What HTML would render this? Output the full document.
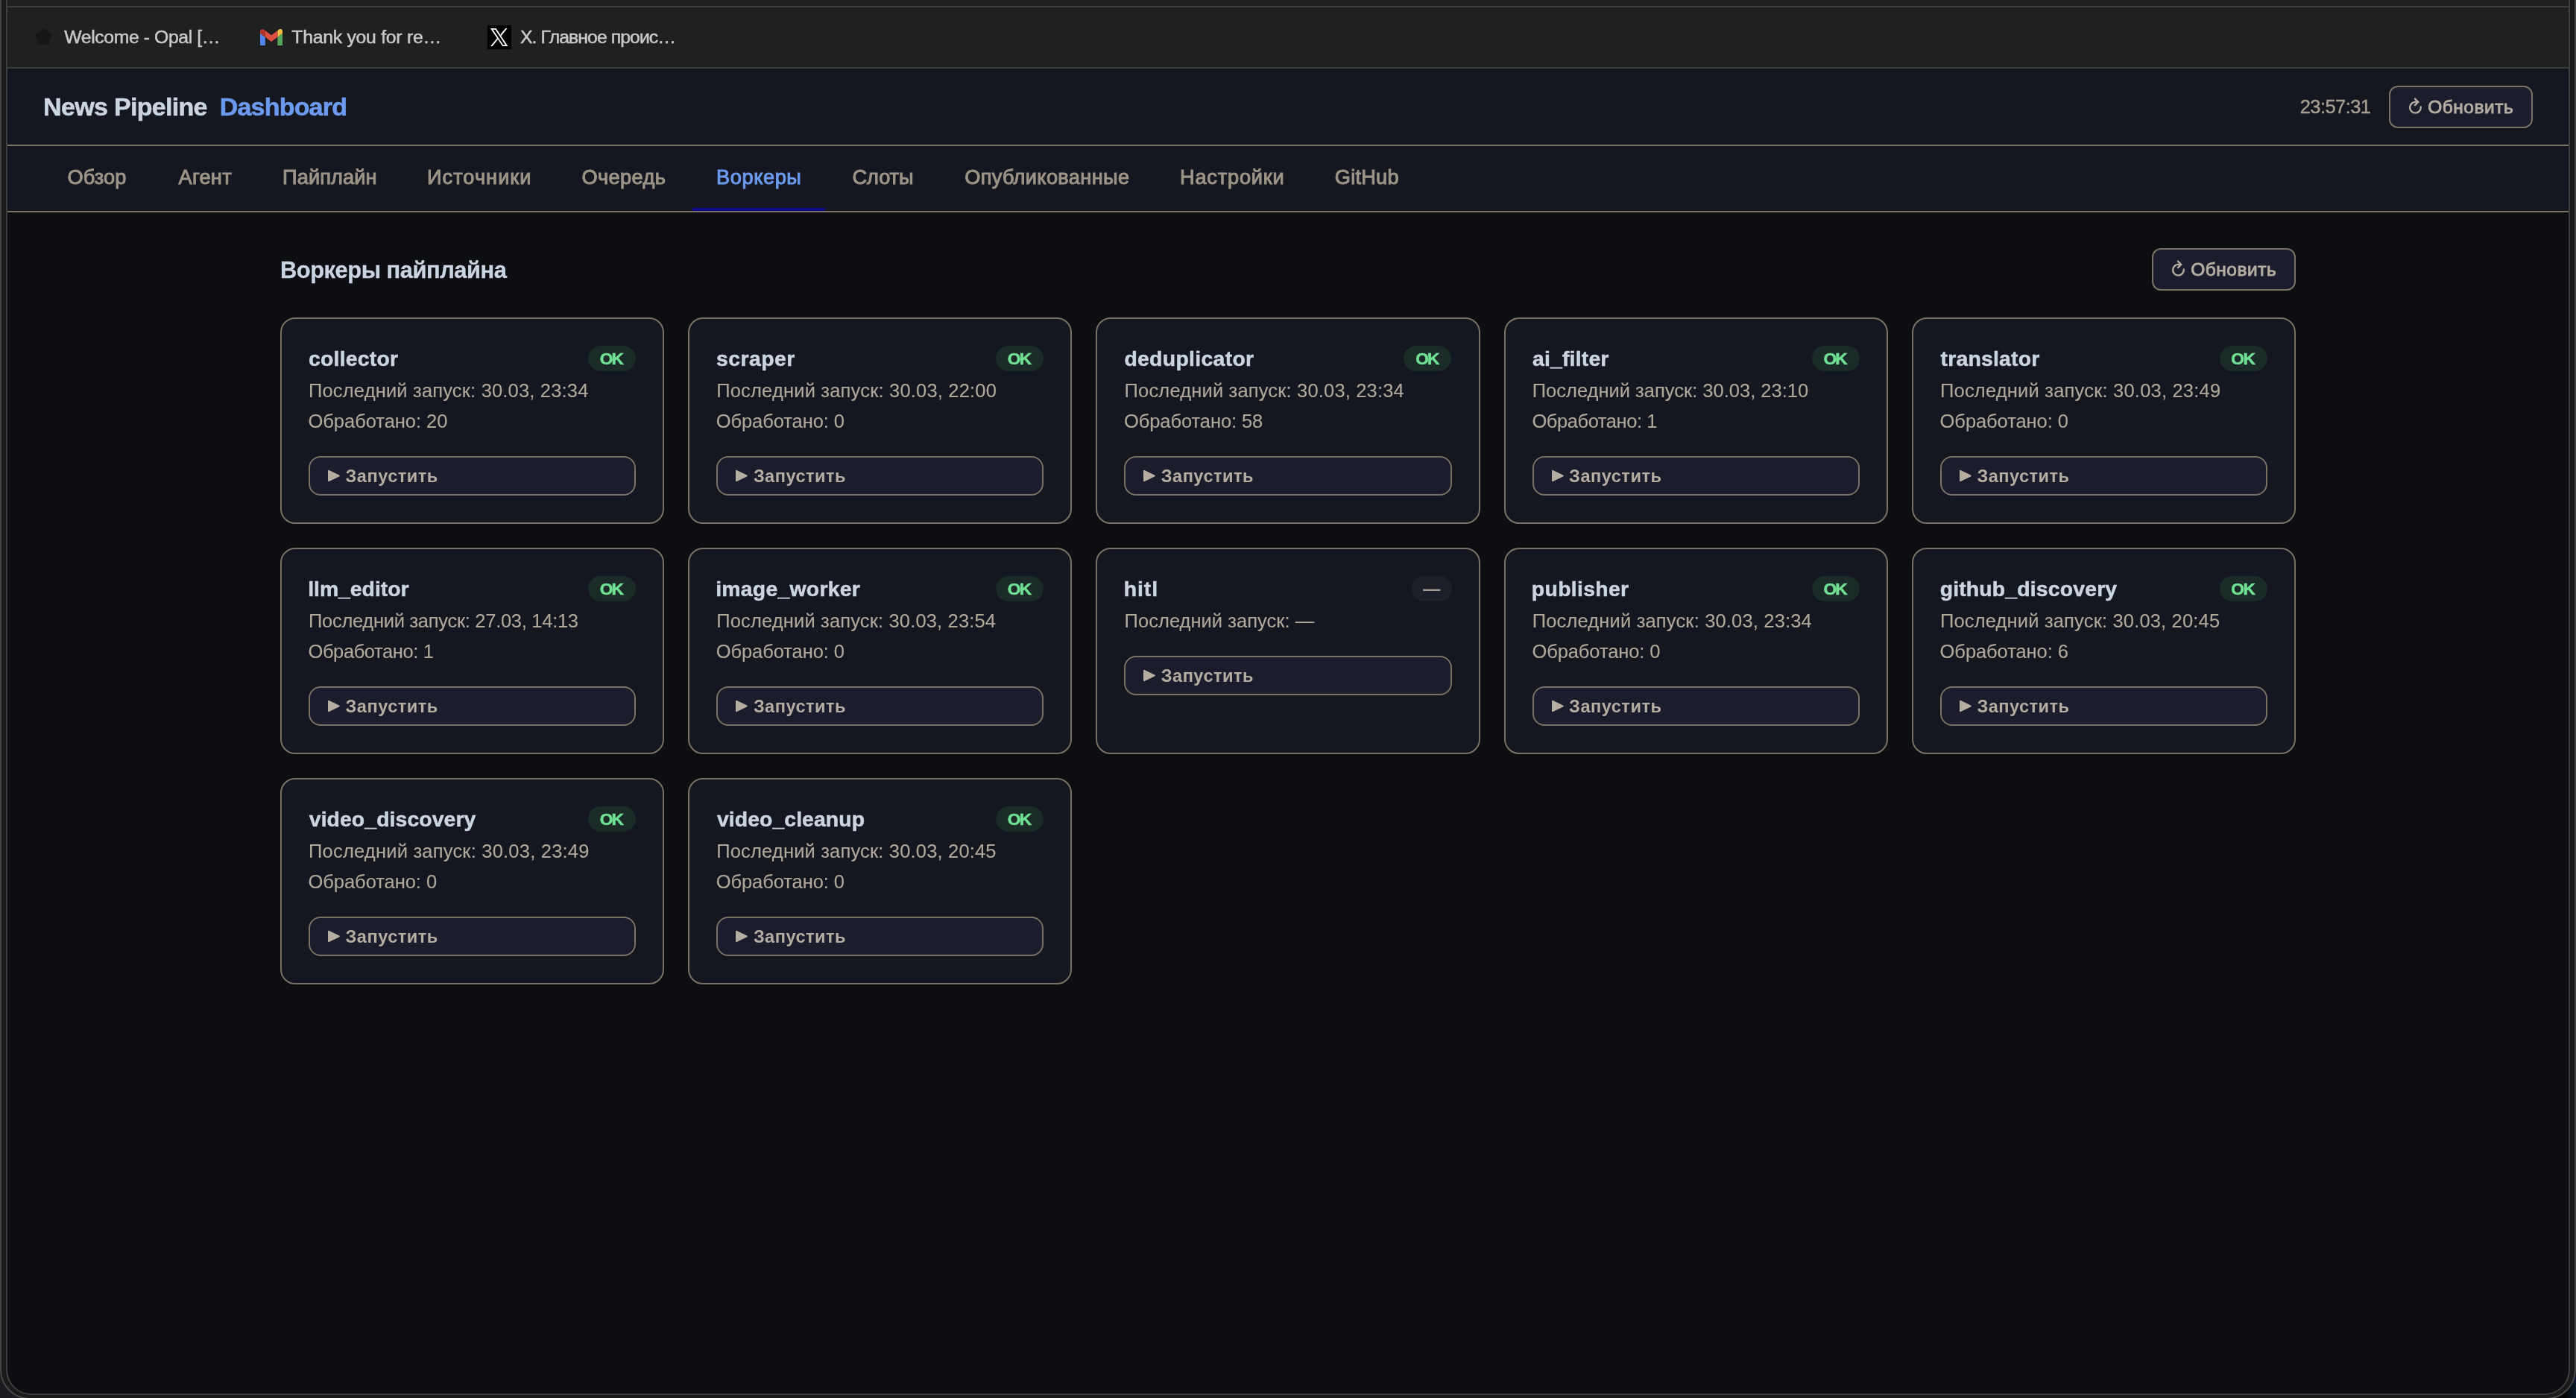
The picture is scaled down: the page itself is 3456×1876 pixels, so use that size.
<!DOCTYPE html>
<html lang="ru"><head><meta charset="utf-8"><title>News Pipeline Dashboard</title>
<style>
*{box-sizing:border-box;margin:0;padding:0}
html,body{width:3456px;height:1876px;overflow:hidden}
body{background:#1a1c20;font-family:"Liberation Sans","DejaVu Sans",sans-serif;position:relative}
.win{position:absolute;left:0;top:-60px;width:3456px;height:1938.4px;border:2px solid #454746;border-radius:40px;background:#191a19}
.inner{position:absolute;left:8px;top:-60px;width:3440px;height:1932px;border:2px solid #3d3e40;border-radius:34px;background:#0d0e12;overflow:hidden}
.cr{position:absolute;left:3426px;top:1846px;width:30px;height:30px;background:linear-gradient(90deg,#000 45%,#0b1b2d)}
.page{position:absolute;left:-10px;top:58px;width:3456px;height:1876px}
.txt{position:absolute;left:0;top:0;width:3456px;height:1876px;will-change:transform}
.bm{position:absolute;left:0;top:0;width:3456px;height:90px;background:#1f2120}
.bml1{position:absolute;left:0;top:8px;width:3456px;height:2px;background:#3d3e40}
.bml2{position:absolute;left:0;top:90px;width:3456px;height:2px;background:#3d3e40}
.hdr{position:absolute;left:0;top:92px;width:3456px;height:102px;background:#141720}
.hl1{position:absolute;left:0;top:194px;width:3456px;height:2px;background:#7a7166}
.nav{position:absolute;left:0;top:196px;width:3456px;height:87px;background:#141720}
.hl2{position:absolute;left:0;top:283px;width:3456px;height:2px;background:#7a7166}
.act{position:absolute;left:929px;top:279px;width:178px;height:4px;background:#0c0c8c}
.t{position:absolute;white-space:nowrap;line-height:40px;height:40px}
.card{position:absolute;width:515.2px;height:277px;border:2px solid #7a7166;border-radius:20px;background:#141620}
.btn{position:absolute;border:2px solid #7a7166;border-radius:12px;background:#1b1c2c}
.btn.run{width:439.2px;height:53px;border-radius:16px}
.btn.upd{width:193px;height:57px}
.badge{position:absolute;height:34px;border-radius:17px}
.badge.ok{width:64px;background:#1b2b27}
.badge.none{width:54px;background:#1e2029}
.tri{position:absolute}
.tri path{fill:#b5ada2;stroke:#b5ada2;stroke-width:2.2;stroke-linejoin:round}
.ico{position:absolute}
.ico path{fill:none;stroke:#b5ada2;stroke-width:2.4;stroke-linecap:round;stroke-linejoin:miter}
</style></head><body>
<div class="cr"></div>
<div class="win"></div>
<div class="inner"><div class="page">
<div class="bm"></div><div class="bml1"></div><div class="bml2"></div>
<div class="hdr"></div><div class="hl1"></div><div class="nav"></div><div class="hl2"></div><div class="act"></div>

<svg style="position:absolute;left:46.5px;top:38.3px" width="23" height="22.5" viewBox="0 0 24 23"><path d="M12 1.2 L22.2 8.8 L18.3 21 L5.7 21 L1.8 8.8 Z" fill="#151616" stroke="#151616" stroke-width="2.2" stroke-linejoin="round"/></svg>
<svg style="position:absolute;left:349px;top:38.7px" width="30.2" height="22.4" viewBox="0 0 31 23" preserveAspectRatio="none">
<path d="M2.1 23h4.9V11.1L0 5.8v15.1C0 22.1.9 23 2.1 23z" fill="#5584ec"/>
<path d="M24 23h4.9c1.2 0 2.1-.9 2.1-2.1V5.8l-7 5.3z" fill="#57a55c"/>
<path d="M24 2.1v9l7-5.3V3.100c0-2.600-3-4.100-5-2.500z" fill="#f1bd41"/>
<path d="M7 11.100V2.100l8.500 6.400L24 2.100v9l-8.500 6.400z" fill="#db5040"/>
<path d="M0 3.100v2.700l7 5.300v-9L5 .6C3-.9 0 .5 0 3.100z" fill="#b7342a"/>
</svg>
<svg style="position:absolute;left:654px;top:34px" width="32" height="32" viewBox="0 0 32 32"><rect width="32" height="32" fill="#000"/>
<path d="M3.900 4.000 L11.500 4.000 L27.400 28.100 L20.200 28.100 Z M7.300 5.800 L21.100 26.300 L24.000 26.300 L10.500 5.800 Z" fill="#fff" fill-rule="evenodd"/>
<path d="M24.200 4.000 L26.600 4.000 L18.270 14.250 L17.190 12.620 Z" fill="#fff"/>
<path d="M4.100 28.100 L6.500 28.100 L13.970 18.900 L12.880 17.290 Z" fill="#fff"/>
</svg>

<div class="btn upd" style="left:3205px;top:115px"></div>
<svg class="ico" style="left:3229px;top:128px" width="24" height="28" viewBox="0 0 24 28"><path d="M12.7 9.0 A7.35 7.35 0 1 0 18.77 15.56"/><path d="M11 4.6 L15.2 8.9 L11 13.2"/></svg>
<div class="btn upd" style="left:2887px;top:333px"></div>
<svg class="ico" style="left:2911px;top:346px" width="24" height="28" viewBox="0 0 24 28"><path d="M12.7 9.0 A7.35 7.35 0 1 0 18.77 15.56"/><path d="M11 4.6 L15.2 8.9 L11 13.2"/></svg>
<div class="card" style="left:376.0px;top:426px"></div>
<div class="badge ok" style="left:789.0px;top:464px"></div>
<div class="btn run" style="left:414.0px;top:612px"></div>
<svg class="tri" style="left:438.0px;top:628px" width="20" height="22" viewBox="0 0 20 22"><path d="M3.1 3.9 L16.6 10.5 L3.1 17.1 Z"/></svg>
<div class="card" style="left:923.2px;top:426px"></div>
<div class="badge ok" style="left:1336.2px;top:464px"></div>
<div class="btn run" style="left:961.2px;top:612px"></div>
<svg class="tri" style="left:985.2px;top:628px" width="20" height="22" viewBox="0 0 20 22"><path d="M3.1 3.9 L16.6 10.5 L3.1 17.1 Z"/></svg>
<div class="card" style="left:1470.4px;top:426px"></div>
<div class="badge ok" style="left:1883.4px;top:464px"></div>
<div class="btn run" style="left:1508.4px;top:612px"></div>
<svg class="tri" style="left:1532.4px;top:628px" width="20" height="22" viewBox="0 0 20 22"><path d="M3.1 3.9 L16.6 10.5 L3.1 17.1 Z"/></svg>
<div class="card" style="left:2017.6px;top:426px"></div>
<div class="badge ok" style="left:2430.6px;top:464px"></div>
<div class="btn run" style="left:2055.6px;top:612px"></div>
<svg class="tri" style="left:2079.6px;top:628px" width="20" height="22" viewBox="0 0 20 22"><path d="M3.1 3.9 L16.6 10.5 L3.1 17.1 Z"/></svg>
<div class="card" style="left:2564.8px;top:426px"></div>
<div class="badge ok" style="left:2977.8px;top:464px"></div>
<div class="btn run" style="left:2602.8px;top:612px"></div>
<svg class="tri" style="left:2626.8px;top:628px" width="20" height="22" viewBox="0 0 20 22"><path d="M3.1 3.9 L16.6 10.5 L3.1 17.1 Z"/></svg>
<div class="card" style="left:376.0px;top:735px"></div>
<div class="badge ok" style="left:789.0px;top:773px"></div>
<div class="btn run" style="left:414.0px;top:921px"></div>
<svg class="tri" style="left:438.0px;top:937px" width="20" height="22" viewBox="0 0 20 22"><path d="M3.1 3.9 L16.6 10.5 L3.1 17.1 Z"/></svg>
<div class="card" style="left:923.2px;top:735px"></div>
<div class="badge ok" style="left:1336.2px;top:773px"></div>
<div class="btn run" style="left:961.2px;top:921px"></div>
<svg class="tri" style="left:985.2px;top:937px" width="20" height="22" viewBox="0 0 20 22"><path d="M3.1 3.9 L16.6 10.5 L3.1 17.1 Z"/></svg>
<div class="card" style="left:1470.4px;top:735px"></div>
<div class="badge none" style="left:1894.0px;top:773px"></div>
<div class="btn run" style="left:1508.4px;top:880px"></div>
<svg class="tri" style="left:1532.4px;top:896px" width="20" height="22" viewBox="0 0 20 22"><path d="M3.1 3.9 L16.6 10.5 L3.1 17.1 Z"/></svg>
<div class="card" style="left:2017.6px;top:735px"></div>
<div class="badge ok" style="left:2430.6px;top:773px"></div>
<div class="btn run" style="left:2055.6px;top:921px"></div>
<svg class="tri" style="left:2079.6px;top:937px" width="20" height="22" viewBox="0 0 20 22"><path d="M3.1 3.9 L16.6 10.5 L3.1 17.1 Z"/></svg>
<div class="card" style="left:2564.8px;top:735px"></div>
<div class="badge ok" style="left:2977.8px;top:773px"></div>
<div class="btn run" style="left:2602.8px;top:921px"></div>
<svg class="tri" style="left:2626.8px;top:937px" width="20" height="22" viewBox="0 0 20 22"><path d="M3.1 3.9 L16.6 10.5 L3.1 17.1 Z"/></svg>
<div class="card" style="left:376.0px;top:1044px"></div>
<div class="badge ok" style="left:789.0px;top:1082px"></div>
<div class="btn run" style="left:414.0px;top:1230px"></div>
<svg class="tri" style="left:438.0px;top:1246px" width="20" height="22" viewBox="0 0 20 22"><path d="M3.1 3.9 L16.6 10.5 L3.1 17.1 Z"/></svg>
<div class="card" style="left:923.2px;top:1044px"></div>
<div class="badge ok" style="left:1336.2px;top:1082px"></div>
<div class="btn run" style="left:961.2px;top:1230px"></div>
<svg class="tri" style="left:985.2px;top:1246px" width="20" height="22" viewBox="0 0 20 22"><path d="M3.1 3.9 L16.6 10.5 L3.1 17.1 Z"/></svg>
<div class="txt">
<div class="t" id="bm1" style="left:86.35px;top:30.44px;font-size:24.75px;color:#c9c9c9;letter-spacing:-0.398px;-webkit-text-stroke:0.5px #c9c9c9">Welcome - Opal […</div>
<div class="t" id="bm2" style="left:391.34px;top:30.44px;font-size:24.75px;color:#c9c9c9;letter-spacing:-0.254px;-webkit-text-stroke:0.5px #c9c9c9">Thank you for re…</div>
<div class="t" id="bm3" style="left:698.00px;top:30.44px;font-size:24.75px;color:#c9c9c9;letter-spacing:-0.909px;-webkit-text-stroke:0.5px #c9c9c9">X. Главное проис…</div>
<div class="t" id="h1" style="left:58.04px;top:123.24px;font-size:34.0px;color:#cbd5e1;letter-spacing:-0.679px;font-weight:700;-webkit-text-stroke:0.6px #cbd5e1">News Pipeline</div>
<div class="t" id="h2" style="left:294.68px;top:123.24px;font-size:34.0px;color:#6b9aef;letter-spacing:-0.789px;font-weight:700;-webkit-text-stroke:0.6px #6b9aef">Dashboard</div>
<div class="t" id="clock" style="left:3085.79px;top:123.18px;font-size:25.5px;color:#a89f93;letter-spacing:-0.590px;-webkit-text-stroke:0.4px #a89f93">23:57:31</div>
<div class="t" id="hb" style="left:3257.29px;top:123.53px;font-size:24.5px;color:#b5ada2;letter-spacing:0.490px;-webkit-text-stroke:0.9px #b5ada2">Обновить</div>
<div class="t" id="nav0" style="left:90.54px;top:217.60px;font-size:27.2px;color:#9d9487;letter-spacing:0.079px;-webkit-text-stroke:1.0px #9d9487">Обзор</div>
<div class="t" id="nav1" style="left:239.58px;top:217.60px;font-size:27.2px;color:#9d9487;letter-spacing:0.241px;-webkit-text-stroke:1.0px #9d9487">Агент</div>
<div class="t" id="nav2" style="left:379.07px;top:217.60px;font-size:27.2px;color:#9d9487;letter-spacing:0.111px;-webkit-text-stroke:1.0px #9d9487">Пайплайн</div>
<div class="t" id="nav3" style="left:572.94px;top:217.60px;font-size:27.2px;color:#9d9487;letter-spacing:1.038px;-webkit-text-stroke:1.0px #9d9487">Источники</div>
<div class="t" id="nav4" style="left:780.54px;top:217.60px;font-size:27.2px;color:#9d9487;letter-spacing:0.368px;-webkit-text-stroke:1.0px #9d9487">Очередь</div>
<div class="t" id="nav5" style="left:961.03px;top:217.60px;font-size:27.2px;color:#6b9aef;letter-spacing:0.588px;-webkit-text-stroke:1.0px #6b9aef">Воркеры</div>
<div class="t" id="nav6" style="left:1143.58px;top:217.60px;font-size:27.2px;color:#9d9487;letter-spacing:-0.117px;-webkit-text-stroke:1.0px #9d9487">Слоты</div>
<div class="t" id="nav7" style="left:1294.15px;top:217.60px;font-size:27.2px;color:#9d9487;letter-spacing:0.340px;-webkit-text-stroke:1.0px #9d9487">Опубликованные</div>
<div class="t" id="nav8" style="left:1582.94px;top:217.60px;font-size:27.2px;color:#9d9487;letter-spacing:0.814px;-webkit-text-stroke:1.0px #9d9487">Настройки</div>
<div class="t" id="nav9" style="left:1790.79px;top:217.60px;font-size:27.2px;color:#9d9487;letter-spacing:0.228px;-webkit-text-stroke:1.0px #9d9487">GitHub</div>
<div class="t" id="sec" style="left:376.03px;top:343.31px;font-size:30.9px;color:#cbd5e1;letter-spacing:-0.489px;font-weight:700;-webkit-text-stroke:0.3px #cbd5e1">Воркеры пайплайна</div>
<div class="t" id="sb" style="left:2939.29px;top:341.53px;font-size:24.5px;color:#b5ada2;letter-spacing:0.490px;-webkit-text-stroke:0.9px #b5ada2">Обновить</div>
<div class="t" id="c0t" style="left:414.09px;top:461.18px;font-size:28.4px;color:#cbd5e1;letter-spacing:0.203px;font-weight:700;-webkit-text-stroke:0.5px #cbd5e1">collector</div>
<div class="t" id="c0a" style="left:414.00px;top:504.18px;font-size:25.5px;color:#b0a79b;letter-spacing:0.173px;-webkit-text-stroke:0.15px #b0a79b">Последний запуск: 30.03, 23:34</div>
<div class="t" id="c0b" style="left:413.51px;top:545.18px;font-size:25.5px;color:#b0a79b;letter-spacing:-0.038px;-webkit-text-stroke:0.15px #b0a79b">Обработано: 20</div>
<div class="t" id="c0o" style="left:804.85px;top:461.14px;font-size:22.75px;color:#70e094;letter-spacing:-2.153px;font-weight:700;-webkit-text-stroke:0.6px #70e094">OK</div>
<div class="t" id="c0r" style="left:463.52px;top:618.84px;font-size:23.6px;color:#b5ada2;letter-spacing:0.487px;font-weight:700">Запустить</div>
<div class="t" id="c1t" style="left:961.04px;top:461.18px;font-size:28.4px;color:#cbd5e1;letter-spacing:0.463px;font-weight:700;-webkit-text-stroke:0.5px #cbd5e1">scraper</div>
<div class="t" id="c1a" style="left:961.21px;top:504.18px;font-size:25.5px;color:#b0a79b;letter-spacing:0.186px;-webkit-text-stroke:0.15px #b0a79b">Последний запуск: 30.03, 22:00</div>
<div class="t" id="c1b" style="left:960.72px;top:545.18px;font-size:25.5px;color:#b0a79b;letter-spacing:-0.085px;-webkit-text-stroke:0.15px #b0a79b">Обработано: 0</div>
<div class="t" id="c1o" style="left:1351.79px;top:461.14px;font-size:22.75px;color:#70e094;letter-spacing:-1.725px;font-weight:700;-webkit-text-stroke:0.6px #70e094">OK</div>
<div class="t" id="c1r" style="left:1010.88px;top:618.84px;font-size:23.6px;color:#b5ada2;letter-spacing:0.463px;font-weight:700">Запустить</div>
<div class="t" id="c2t" style="left:1508.38px;top:461.18px;font-size:28.4px;color:#cbd5e1;letter-spacing:0.307px;font-weight:700;-webkit-text-stroke:0.5px #cbd5e1">deduplicator</div>
<div class="t" id="c2a" style="left:1508.62px;top:504.18px;font-size:25.5px;color:#b0a79b;letter-spacing:0.165px;-webkit-text-stroke:0.15px #b0a79b">Последний запуск: 30.03, 23:34</div>
<div class="t" id="c2b" style="left:1507.99px;top:545.18px;font-size:25.5px;color:#b0a79b;letter-spacing:-0.088px;-webkit-text-stroke:0.15px #b0a79b">Обработано: 58</div>
<div class="t" id="c2o" style="left:1899.29px;top:461.14px;font-size:22.75px;color:#70e094;letter-spacing:-2.086px;font-weight:700;-webkit-text-stroke:0.6px #70e094">OK</div>
<div class="t" id="c2r" style="left:1557.79px;top:618.84px;font-size:23.6px;color:#b5ada2;letter-spacing:0.478px;font-weight:700">Запустить</div>
<div class="t" id="c3t" style="left:2055.91px;top:461.18px;font-size:28.4px;color:#cbd5e1;letter-spacing:0.190px;font-weight:700;-webkit-text-stroke:0.5px #cbd5e1">ai_filter</div>
<div class="t" id="c3a" style="left:2055.76px;top:504.18px;font-size:25.5px;color:#b0a79b;letter-spacing:0.004px;-webkit-text-stroke:0.15px #b0a79b">Последний запуск: 30.03, 23:10</div>
<div class="t" id="c3b" style="left:2055.41px;top:545.18px;font-size:25.5px;color:#b0a79b;letter-spacing:-0.430px;-webkit-text-stroke:0.15px #b0a79b">Обработано: 1</div>
<div class="t" id="c3o" style="left:2446.38px;top:461.14px;font-size:22.75px;color:#70e094;letter-spacing:-1.800px;font-weight:700;-webkit-text-stroke:0.6px #70e094">OK</div>
<div class="t" id="c3r" style="left:2105.12px;top:618.84px;font-size:23.6px;color:#b5ada2;letter-spacing:0.489px;font-weight:700">Запустить</div>
<div class="t" id="c4t" style="left:2603.60px;top:461.18px;font-size:28.4px;color:#cbd5e1;letter-spacing:0.202px;font-weight:700;-webkit-text-stroke:0.5px #cbd5e1">translator</div>
<div class="t" id="c4a" style="left:2602.98px;top:504.18px;font-size:25.5px;color:#b0a79b;letter-spacing:0.200px;-webkit-text-stroke:0.15px #b0a79b">Последний запуск: 30.03, 23:49</div>
<div class="t" id="c4b" style="left:2602.62px;top:545.18px;font-size:25.5px;color:#b0a79b;letter-spacing:-0.085px;-webkit-text-stroke:0.15px #b0a79b">Обработано: 0</div>
<div class="t" id="c4o" style="left:2993.33px;top:461.14px;font-size:22.75px;color:#70e094;letter-spacing:-1.553px;font-weight:700;-webkit-text-stroke:0.6px #70e094">OK</div>
<div class="t" id="c4r" style="left:2652.39px;top:618.84px;font-size:23.6px;color:#b5ada2;letter-spacing:0.475px;font-weight:700">Запустить</div>
<div class="t" id="c5t" style="left:413.18px;top:770.18px;font-size:28.4px;color:#cbd5e1;letter-spacing:-0.031px;font-weight:700;-webkit-text-stroke:0.5px #cbd5e1">llm_editor</div>
<div class="t" id="c5a" style="left:414.00px;top:813.18px;font-size:25.5px;color:#b0a79b;letter-spacing:-0.286px;-webkit-text-stroke:0.15px #b0a79b">Последний запуск: 27.03, 14:13</div>
<div class="t" id="c5b" style="left:413.51px;top:854.18px;font-size:25.5px;color:#b0a79b;letter-spacing:-0.408px;-webkit-text-stroke:0.15px #b0a79b">Обработано: 1</div>
<div class="t" id="c5o" style="left:804.85px;top:770.14px;font-size:22.75px;color:#70e094;letter-spacing:-2.153px;font-weight:700;-webkit-text-stroke:0.6px #70e094">OK</div>
<div class="t" id="c5r" style="left:463.52px;top:927.84px;font-size:23.6px;color:#b5ada2;letter-spacing:0.487px;font-weight:700">Запустить</div>
<div class="t" id="c6t" style="left:960.18px;top:770.18px;font-size:28.4px;color:#cbd5e1;letter-spacing:0.253px;font-weight:700;-webkit-text-stroke:0.5px #cbd5e1">image_worker</div>
<div class="t" id="c6a" style="left:961.21px;top:813.18px;font-size:25.5px;color:#b0a79b;letter-spacing:0.154px;-webkit-text-stroke:0.15px #b0a79b">Последний запуск: 30.03, 23:54</div>
<div class="t" id="c6b" style="left:960.72px;top:854.18px;font-size:25.5px;color:#b0a79b;letter-spacing:-0.085px;-webkit-text-stroke:0.15px #b0a79b">Обработано: 0</div>
<div class="t" id="c6o" style="left:1351.79px;top:770.14px;font-size:22.75px;color:#70e094;letter-spacing:-1.725px;font-weight:700;-webkit-text-stroke:0.6px #70e094">OK</div>
<div class="t" id="c6r" style="left:1010.88px;top:927.84px;font-size:23.6px;color:#b5ada2;letter-spacing:0.463px;font-weight:700">Запустить</div>
<div class="t" id="c7t" style="left:1507.63px;top:770.18px;font-size:28.4px;color:#cbd5e1;letter-spacing:0.939px;font-weight:700;-webkit-text-stroke:0.5px #cbd5e1">hitl</div>
<div class="t" id="c7a" style="left:1508.62px;top:813.18px;font-size:25.5px;color:#b0a79b;letter-spacing:0.033px;-webkit-text-stroke:0.15px #b0a79b">Последний запуск: —</div>
<div class="t" id="c7o" style="left:1909.12px;top:769.95px;font-size:23.3px;color:#a59c90;letter-spacing:0.000px;font-weight:700">—</div>
<div class="t" id="c7r" style="left:1557.79px;top:886.84px;font-size:23.6px;color:#b5ada2;letter-spacing:0.478px;font-weight:700">Запустить</div>
<div class="t" id="c8t" style="left:2054.85px;top:770.18px;font-size:28.4px;color:#cbd5e1;letter-spacing:0.315px;font-weight:700;-webkit-text-stroke:0.5px #cbd5e1">publisher</div>
<div class="t" id="c8a" style="left:2055.76px;top:813.18px;font-size:25.5px;color:#b0a79b;letter-spacing:0.162px;-webkit-text-stroke:0.15px #b0a79b">Последний запуск: 30.03, 23:34</div>
<div class="t" id="c8b" style="left:2055.41px;top:854.18px;font-size:25.5px;color:#b0a79b;letter-spacing:-0.093px;-webkit-text-stroke:0.15px #b0a79b">Обработано: 0</div>
<div class="t" id="c8o" style="left:2446.38px;top:770.14px;font-size:22.75px;color:#70e094;letter-spacing:-1.800px;font-weight:700;-webkit-text-stroke:0.6px #70e094">OK</div>
<div class="t" id="c8r" style="left:2105.12px;top:927.84px;font-size:23.6px;color:#b5ada2;letter-spacing:0.489px;font-weight:700">Запустить</div>
<div class="t" id="c9t" style="left:2602.68px;top:770.18px;font-size:28.4px;color:#cbd5e1;letter-spacing:0.160px;font-weight:700;-webkit-text-stroke:0.5px #cbd5e1">github_discovery</div>
<div class="t" id="c9a" style="left:2602.98px;top:813.18px;font-size:25.5px;color:#b0a79b;letter-spacing:0.165px;-webkit-text-stroke:0.15px #b0a79b">Последний запуск: 30.03, 20:45</div>
<div class="t" id="c9b" style="left:2602.62px;top:854.18px;font-size:25.5px;color:#b0a79b;letter-spacing:-0.080px;-webkit-text-stroke:0.15px #b0a79b">Обработано: 6</div>
<div class="t" id="c9o" style="left:2993.33px;top:770.14px;font-size:22.75px;color:#70e094;letter-spacing:-1.553px;font-weight:700;-webkit-text-stroke:0.6px #70e094">OK</div>
<div class="t" id="c9r" style="left:2652.39px;top:927.84px;font-size:23.6px;color:#b5ada2;letter-spacing:0.475px;font-weight:700">Запустить</div>
<div class="t" id="c10t" style="left:414.79px;top:1079.18px;font-size:28.4px;color:#cbd5e1;letter-spacing:0.071px;font-weight:700;-webkit-text-stroke:0.5px #cbd5e1">video_discovery</div>
<div class="t" id="c10a" style="left:414.00px;top:1122.18px;font-size:25.5px;color:#b0a79b;letter-spacing:0.210px;-webkit-text-stroke:0.15px #b0a79b">Последний запуск: 30.03, 23:49</div>
<div class="t" id="c10b" style="left:413.51px;top:1163.18px;font-size:25.5px;color:#b0a79b;letter-spacing:-0.050px;-webkit-text-stroke:0.15px #b0a79b">Обработано: 0</div>
<div class="t" id="c10o" style="left:804.85px;top:1079.14px;font-size:22.75px;color:#70e094;letter-spacing:-2.153px;font-weight:700;-webkit-text-stroke:0.6px #70e094">OK</div>
<div class="t" id="c10r" style="left:463.52px;top:1236.84px;font-size:23.6px;color:#b5ada2;letter-spacing:0.487px;font-weight:700">Запустить</div>
<div class="t" id="c11t" style="left:961.97px;top:1079.18px;font-size:28.4px;color:#cbd5e1;letter-spacing:0.065px;font-weight:700;-webkit-text-stroke:0.5px #cbd5e1">video_cleanup</div>
<div class="t" id="c11a" style="left:961.21px;top:1122.18px;font-size:25.5px;color:#b0a79b;letter-spacing:0.173px;-webkit-text-stroke:0.15px #b0a79b">Последний запуск: 30.03, 20:45</div>
<div class="t" id="c11b" style="left:960.72px;top:1163.18px;font-size:25.5px;color:#b0a79b;letter-spacing:-0.085px;-webkit-text-stroke:0.15px #b0a79b">Обработано: 0</div>
<div class="t" id="c11o" style="left:1351.79px;top:1079.14px;font-size:22.75px;color:#70e094;letter-spacing:-1.725px;font-weight:700;-webkit-text-stroke:0.6px #70e094">OK</div>
<div class="t" id="c11r" style="left:1010.88px;top:1236.84px;font-size:23.6px;color:#b5ada2;letter-spacing:0.463px;font-weight:700">Запустить</div>
</div>
</div></div>
</body></html>
